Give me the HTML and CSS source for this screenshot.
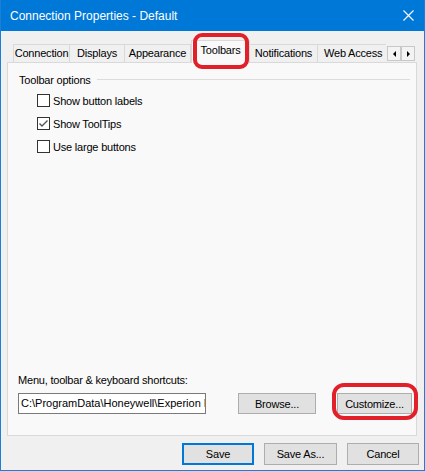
FILE: index.html
```html
<!DOCTYPE html>
<html lang="en">
<head>
    <meta charset="UTF-8">
    <title>Connection Properties - Default</title>
    <link rel="stylesheet" href="styles.css">
</head>
<body>
    <div class="window">
        <div class="titlebar">
            <span class="title">Connection Properties - Default</span>
            <svg class="close" width="11" height="11" viewBox="0 0 11 11">
                <path d="M0.5 0.5 L10.5 10.5 M10.5 0.5 L0.5 10.5" stroke="#fff" stroke-width="1.1" fill="none"/>
            </svg>
        </div>

        <div class="tabstrip">
            <div class="tabs">
                <div class="tab tab-connection">Connection</div>
                <div class="tab tab-displays">Displays</div>
                <div class="tab tab-appearance">Appearance</div>
                <div class="tab tab-toolbars selected">Toolbars<span class="ring ring-tab"></span></div>
                <div class="tab tab-notifications">Notifications</div>
                <div class="tab tab-web">Web Access</div>
            </div>
            <div class="scroller">
                <div class="arrow"><span class="tri left"></span></div>
                <div class="arrow"><span class="tri right"></span></div>
            </div>
        </div>

        <div class="panel">
            <div class="group">
                <div class="group-head">
                    <span>Toolbar options</span>
                    <span class="rule"></span>
                </div>
                <div class="options">
                    <label class="option"><span class="box"></span>Show button labels</label>
                    <label class="option">
                        <span class="box">
                            <svg width="11" height="11" viewBox="0 0 11 11">
                                <polyline points="1.5,5.5 4,8 9.5,2.5" stroke="#555" stroke-width="1.4" fill="none"/>
                            </svg>
                        </span>Show ToolTips
                    </label>
                    <label class="option"><span class="box"></span>Use large buttons</label>
                </div>
            </div>

            <div class="shortcuts">
                <div class="shortcuts-label">Menu, toolbar &amp; keyboard shortcuts:</div>
                <div class="shortcuts-row">
                    <div class="field">C:\ProgramData\Honeywell\Experion PKS</div>
                    <button class="btn browse">Browse...</button>
                    <button class="btn customize">Customize...<span class="ring ring-btn"></span></button>
                </div>
            </div>
        </div>

        <div class="footer">
            <button class="btn default">Save</button>
            <button class="btn save-as">Save As...</button>
            <button class="btn">Cancel</button>
        </div>
    </div>
</body>
</html>
```

FILE: styles.css
```css
body {
    margin: 0;
    padding: 0;
    background-color: #f0f0f0;
}
.window {
    width: 425px;
    height: 471px;
    box-sizing: border-box;
    border: 1px solid #1a7fd6;
    border-top: none;
    background-color: #f0f0f0;
    display: flex;
    flex-direction: column;
    font-family: "Liberation Sans", Arial, sans-serif;
    font-size: 11px;
    letter-spacing: -0.2px;
    color: #000;
}
.titlebar {
    height: 31px;
    flex: none;
    background-color: #0078d7;
    color: #fff;
    display: flex;
    align-items: center;
    justify-content: space-between;
    padding: 0 10px 0 9px;
    font-size: 12px;
    letter-spacing: 0;
}
.close {
    display: block;
}

/* tabs */
.tabstrip {
    height: 31px;
    flex: none;
    display: flex;
    align-items: flex-end;
    padding-left: 12px;
}
.tabs {
    flex: 1;
    min-width: 0;
    display: flex;
    align-items: flex-end;
    overflow-x: clip;
    overflow-y: visible;
}
.tab {
    height: 18px;
    line-height: 17px;
    flex: none;
    box-sizing: border-box;
    text-align: center;
    border-top: 1px solid #d9d9d9;
    border-right: 1px solid #d9d9d9;
    background-color: #f0f0f0;
    white-space: nowrap;
}
.tab-connection {
    width: 57px;
    border-left: 1px solid #d9d9d9;
}
.tab-displays { width: 55px; }
.tab-appearance { width: 66px; }
.tab-toolbars { width: 59px; }
.tab-notifications { width: 68px; }
.tab-web {
    width: 80px;
    text-align: left;
    padding-left: 6px;
}
.tab.selected {
    position: relative;
    z-index: 1;
    height: 23px;
    line-height: 19px;
    margin-bottom: -1px;
    border-left: 1px solid #d9d9d9;
    background-color: #f9f9f9;
}
.scroller {
    display: flex;
    margin: 0 9px 1px 1px;
}
.arrow {
    width: 14px;
    height: 15px;
    box-sizing: border-box;
    border: 1px solid #c8c8c8;
    background-color: #f3f3f3;
    display: flex;
    align-items: center;
    justify-content: center;
}
.tri {
    width: 0;
    height: 0;
    border-top: 3px solid transparent;
    border-bottom: 3px solid transparent;
}
.tri.left {
    border-right: 3px solid #000;
}
.tri.right {
    border-left: 3px solid #000;
}

/* red highlight marks */
.ring {
    position: absolute;
    border: 4px solid #e2202a;
    border-radius: 9px;
    pointer-events: none;
}
.ring-tab {
    top: -8px;
    bottom: -6px;
    left: 1px;
    right: 0;
}
.ring-btn {
    top: -11px;
    bottom: -7px;
    left: -6px;
    right: -7px;
    border-radius: 12px;
}

/* panel */
.panel {
    height: 374px;
    flex: none;
    box-sizing: border-box;
    margin: 0 7px 0 6px;
    border: 1px solid #d9d9d9;
    background-color: #f9f9f9;
    display: flex;
    flex-direction: column;
    justify-content: space-between;
}
.group {
    margin: 10px 6px 0 11px;
}
.group-head {
    display: flex;
    align-items: center;
    height: 13px;
}
.rule {
    flex: 1;
    margin-left: 6px;
    border-top: 1px solid #dcdcdc;
}
.options {
    margin-top: 3px;
    padding-left: 18px;
}
.option {
    height: 23px;
    display: flex;
    align-items: center;
    gap: 3px;
}
.box {
    width: 13px;
    height: 13px;
    box-sizing: border-box;
    border: 1px solid #333;
    background-color: #fff;
    display: flex;
    align-items: center;
    justify-content: center;
}
.shortcuts {
    padding: 0 0 21px 10px;
}
.shortcuts-label {
    height: 13px;
    line-height: 13px;
    margin-bottom: 6px;
}
.shortcuts-row {
    display: flex;
    align-items: center;
}
.field {
    width: 188px;
    height: 21px;
    box-sizing: border-box;
    border: 1px solid #7a7a7a;
    background-color: #fff;
    padding: 0 2px;
    line-height: 19px;
    letter-spacing: 0;
    white-space: nowrap;
    overflow: hidden;
    margin-right: 32px;
}

/* buttons */
.btn {
    height: 21px;
    box-sizing: border-box;
    border: 1px solid #adadad;
    background-color: #e1e1e1;
    font-family: inherit;
    font-size: 11px;
    letter-spacing: -0.2px;
    color: #000;
    padding: 0;
}
.browse {
    width: 78px;
    margin-right: 21px;
}
.customize {
    width: 75px;
    position: relative;
}
.footer {
    display: flex;
    justify-content: flex-end;
    gap: 10px;
    padding: 7px 5px 0 0;
}
.footer .btn {
    width: 72px;
    height: 22px;
}
.footer .btn.default {
    border: 1px solid #0078d7;
    box-shadow: inset 0 0 0 1px #0078d7;
}
.footer .btn.save-as {
    width: 73px;
}
```
